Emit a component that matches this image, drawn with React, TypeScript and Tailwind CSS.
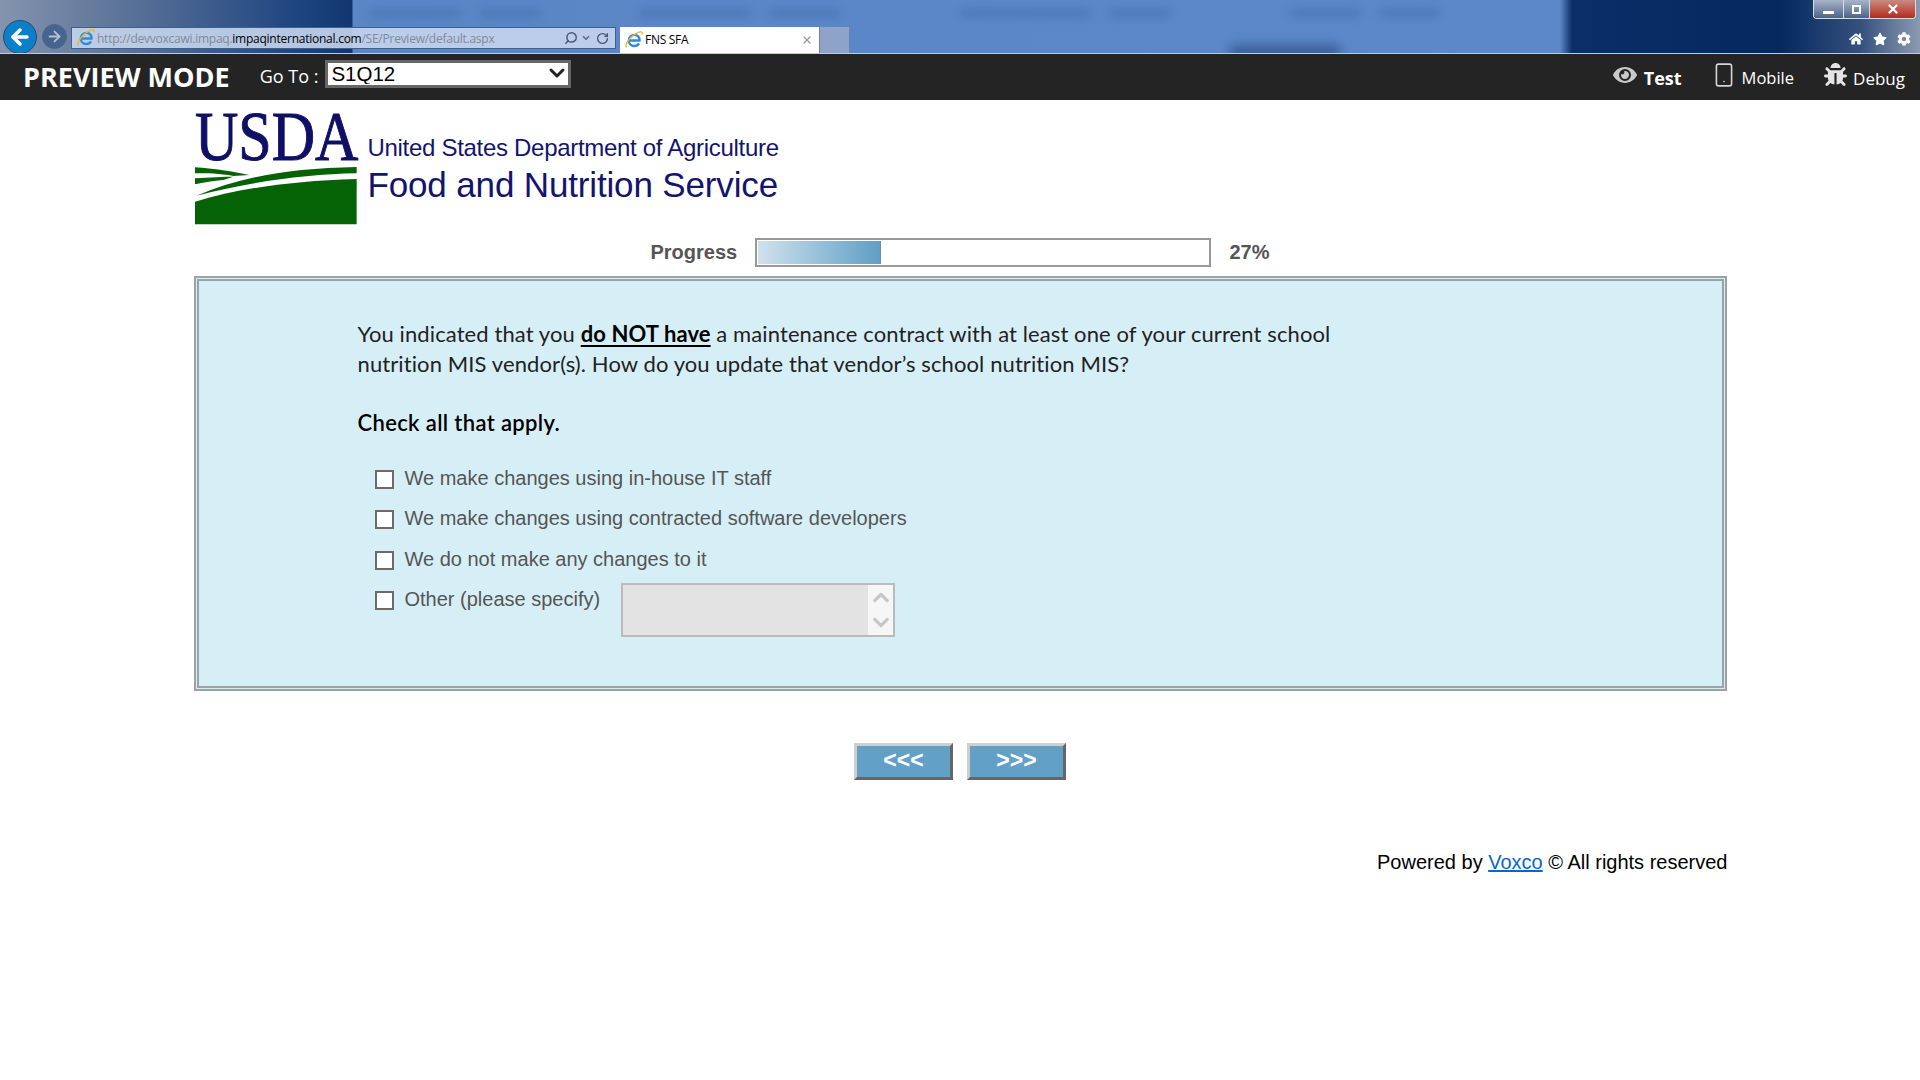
import { ArrowLeft, ArrowRight, ChevronDown, ChevronUp, RotateCw, Search, Smartphone, X } from 'lucide-react';
import { FaBug, FaCog, FaEye, FaHome, FaStar } from 'react-icons/fa';

const options = [
  'We make changes using in-house IT staff',
  'We make changes using contracted software developers',
  'We do not make any changes to it',
];

// blurred shapes behind the glass of the browser frame
const smudges = [
  'left-[370px] w-[90px]',
  'left-[480px] w-[60px]',
  'left-[640px] w-[110px]',
  'left-[770px] w-[70px]',
  'left-[960px] w-[130px]',
  'left-[1110px] w-[60px]',
  'left-[1290px] w-[70px]',
  'left-[1380px] w-[60px]',
];

const IeIcon = () => (
  <svg width="20" height="20" viewBox="0 0 20 20" className="shrink-0">
    <path d="M5 10.5h10.5c.2-3.4-2-5.6-5-5.6-3.300 0-5.700 2.500-5.700 5.600s2.300 5.500 5.500 5.500c2.200 0 3.800-1 4.700-2.600" fill="none" stroke="#2f8bdc" strokeWidth="2.400" />
    <path d="M2.500 17.500C.5 15 6 6 14 2.500c3.500-1.500 5-.5 4 2" fill="none" stroke="#eeb422" strokeWidth="1.300" />
  </svg>
);

const Checkbox = () => (
  <input type="checkbox" className="appearance-none w-[19px] h-[19px] mt-[2px] shrink-0 bg-white border-2 border-[#6b6b6b] rounded-none" />
);

const NavButton = ({ label }: { label: string }) => (
  <button className="w-[99px] h-[37px] bg-[#62a0c8] border-[3px] border-t-[#cfcfcf] border-l-[#cfcfcf] border-r-[#666] border-b-[#666] text-white font-bold text-[23px] leading-none pb-[3px]">
    {label}
  </button>
);

const App = () => {
  return (
    <div className="min-h-screen bg-white font-['Liberation_Sans',Arial,sans-serif]">
      {/* browser chrome */}
      <div className="relative h-[54px] overflow-hidden border-b border-[#b9cce8] bg-[linear-gradient(90deg,#8494ad_0px,#5d7499_120px,#1d447f_300px,#12376f_352px,#5a86c6_353px,#5c88c9_1560px,#0a2f68_1572px,#04295f_1780px,#35507d_1860px,#8c9ab0_1920px)]">
        {smudges.map(pos => (
          <div key={pos} className={`absolute top-[9px] h-[8px] bg-[#34609f] opacity-40 blur-[5px] ${pos}`} />
        ))}
        <div className="absolute top-[46px] left-[1230px] w-[110px] h-[12px] bg-[#17366e] opacity-60 blur-[6px]" />
        <div className="relative h-full flex items-end">
          <div className="w-[34px] h-[34px] ml-[3px] mb-[-1px] rounded-full bg-[#0b7fc7] border border-[#2b4a72] flex items-center justify-center shrink-0">
            <ArrowLeft size={24} strokeWidth={3.500} className="text-white" />
          </div>
          <div className="w-[25px] h-[25px] ml-[5px] mb-[4px] rounded-full border border-[#4a6790] bg-[#47648f] flex items-center justify-center shrink-0">
            <ArrowRight size={17} strokeWidth={2.500} className="text-[#b4c0d2]" />
          </div>
          <div className="w-[545px] h-[22px] ml-[4px] mb-[4px] flex items-center pl-[4px] pr-[6px] bg-[#c5d5ec]/90 border border-[#3d5f92] shrink-0">
            <IeIcon />
            <span className="ml-[1px] mt-[1px] text-[12px] font-['Open_Sans',sans-serif] tracking-[-0.25px] text-[#7f8a9b] whitespace-nowrap">
              http://devvoxcawi.impaq.<span className="text-black">impaqinternational.com</span>/SE/Preview/default.aspx
            </span>
            <Search size={14} strokeWidth={2.500} className="ml-auto text-[#4b5a70] -scale-x-100" />
            <ChevronDown size={10} strokeWidth={4} className="ml-[3px] text-[#5f6d82]" />
            <RotateCw size={13} strokeWidth={2.500} className="ml-[5px] text-[#4b5a70]" />
          </div>
          <div className="w-[199px] h-[26px] ml-[4px] flex items-center pl-[4px] pr-[6px] bg-white shrink-0">
            <IeIcon />
            <span className="ml-[1px] text-[12px] font-['Open_Sans',sans-serif] tracking-[-0.3px] text-black">FNS SFA</span>
            <X size={12} strokeWidth={2.500} className="ml-auto text-[#9a9a9a]" />
          </div>
          <div className="w-[30px] h-[26px] bg-[#8ea3c7] border-l border-[#6d84ab] shrink-0" />
          <div className="ml-auto h-full flex flex-col items-end pr-[4px]">
            <div className="flex h-[19px] w-[103px] rounded-b-[4px] border border-t-0 border-[#d6dce6] overflow-hidden shrink-0">
              <div className="w-[29px] bg-[linear-gradient(180deg,#a9b6c9,#4c628a)] flex items-end justify-center pb-[4px]">
                <div className="w-[11px] h-[3px] bg-white" />
              </div>
              <div className="w-[27px] bg-[linear-gradient(180deg,#a9b6c9,#4c628a)] border-x border-[#d6dce6] flex items-center justify-center">
                <div className="w-[9px] h-[9px] border-2 border-white" />
              </div>
              <div className="flex-1 bg-[linear-gradient(180deg,#c98b80,#b52a1c)] flex items-center justify-center">
                <X size={14} strokeWidth={4} className="text-white" />
              </div>
            </div>
            <div className="flex items-center gap-[10px] mt-[13px] text-white pr-[5px]">
              <FaHome size={14} />
              <FaStar size={14} />
              <FaCog size={14} />
            </div>
          </div>
        </div>
      </div>

      {/* preview toolbar */}
      <div className="h-[46px] bg-[#242424] flex items-center text-white pl-[23px] pr-[15px]">
        <span className="font-['Open_Sans',sans-serif] font-bold text-[27px] whitespace-nowrap">PREVIEW MODE</span>
        <span className="ml-[30px] font-['Open_Sans',sans-serif] font-medium text-[18px] whitespace-nowrap mb-[2px]">Go To :</span>
        <div className="relative ml-[7px] mb-[6px]">
          <select className="appearance-none block w-[246px] h-[28px] pl-[3px] bg-white border-[3px] border-[#666] text-black text-[20.500px] leading-none">
            <option>S1Q12</option>
          </select>
          <ChevronDown size={24} strokeWidth={3} className="absolute right-[2px] top-[1px] text-[#222]" />
        </div>
        <div className="ml-auto flex items-center font-['Open_Sans',sans-serif] text-[17px]">
          <FaEye size={24} className="text-[#c9c9c9] mb-[5px]" />
          <span className="ml-[7px] font-bold text-[18px] mt-[3px]">Test</span>
          <Smartphone size={26} strokeWidth={1.500} className="ml-[29px] mb-[4px] text-[#d5d5d5]" />
          <span className="ml-[5px] mt-[3px] text-[16.500px]">Mobile</span>
          <FaBug size={23} className="ml-[30px] mb-[5px] text-[#e4e4e4]" />
          <span className="ml-[6px] mt-[3px]">Debug</span>
        </div>
      </div>

      <div className="w-[1533px] mx-auto">
        {/* logo */}
        <div className="flex pt-[5px]">
          <svg width="170" height="125" viewBox="12 0 510 375" className="shrink-0 overflow-visible">
            <text x="15" y="166" textLength="490" lengthAdjust="spacingAndGlyphs" fontFamily="'Liberation Serif', serif" fontSize="210" fill="#0f0f66" stroke="#0f0f66" strokeWidth="3">USDA</text>
            <path d="M15 290C150 250 300 228 500 222V358H15Z" fill="#056205" />
            <path d="M20 272C150 215 300 190 500 186V205C350 208 180 230 20 272Z" fill="#056205" />
            <path d="M15 187C70 190 130 200 178 210L130 213C90 205 50 205 15 205Z" fill="#056205" />
            <path d="M15 220C60 217 100 215 130 215L100 225C70 228 40 232 15 238Z" fill="#056205" />
          </svg>
          <div className="ml-[4px] pt-[28px] text-[#14146e] whitespace-nowrap">
            <div className="text-[24px] leading-[30px] tracking-[-0.3px]">United States Department of Agriculture</div>
            <div className="text-[35px] leading-[44px] tracking-[-0.15px]">Food and Nutrition Service</div>
          </div>
        </div>

        {/* progress */}
        <div className="flex items-center mt-[7px] pl-[457px] text-[20px] font-bold text-[#555]">
          <span className="w-[86px] whitespace-nowrap">Progress</span>
          <div className="ml-[18px] w-[456px] h-[29px] border-2 border-[#999] p-[1px] bg-white">
            <div className="h-full w-[123px] bg-[linear-gradient(90deg,#d0e1ed,#5f9fc6)] border-r border-[#7a8a94]" />
          </div>
          <span className="ml-[19px]">27%</span>
        </div>

        {/* question panel */}
        <div className="mt-[9px] h-[415px] border-[5px] border-double border-[#9aa3a6] bg-[#d6eff7] pl-[159px] pt-[38px]">
          <div className="w-[1000px] text-[22px] leading-[29.500px] tracking-[0.1px] text-[#222] font-['Lato',sans-serif]">
            <p>
              You indicated that you <span className="font-bold text-black underline underline-offset-[3px]">do NOT have</span> a maintenance contract with at least one of your current school nutrition MIS vendor(s). How do you update that vendor’s school nutrition MIS?
            </p>
            <p className="mt-[30px] font-semibold tracking-[0.35px] text-black">Check all that apply.</p>
          </div>
          <div className="mt-[29px] pl-[17px] flex flex-col gap-[17.500px] text-[20px] leading-[23px] text-[#555]">
            {options.map(option => (
              <label key={option} className="flex items-center">
                <Checkbox />
                <span className="ml-[11px]">{option}</span>
              </label>
            ))}
            <div className="flex items-start">
              <div className="flex items-center">
                <Checkbox />
                <span className="ml-[11px]">Other (please specify)</span>
              </div>
              <div className="ml-[21px] mt-[-5px] w-[274px] h-[54px] flex border-2 border-[#bbb] bg-[#e3e3e3]">
                <textarea disabled className="flex-1 min-w-0 bg-transparent resize-none" />
                <div className="w-[25px] bg-[#f6f6f6] flex flex-col items-center justify-around text-[#c6c6c6]">
                  <ChevronUp size={26} strokeWidth={3} />
                  <ChevronDown size={26} strokeWidth={3} />
                </div>
              </div>
            </div>
          </div>
        </div>

        {/* nav buttons */}
        <div className="flex justify-center gap-[14px] mt-[52px]">
          <NavButton label="<<<" />
          <NavButton label=">>>" />
        </div>

        <div className="mt-[71px] mr-[-1px] text-right text-[20px] leading-[23px] text-black">
          Powered by <a href="#" className="text-[#0a66cc] underline">Voxco</a> © All rights reserved
        </div>
      </div>
    </div>
  );
};

export default App;
